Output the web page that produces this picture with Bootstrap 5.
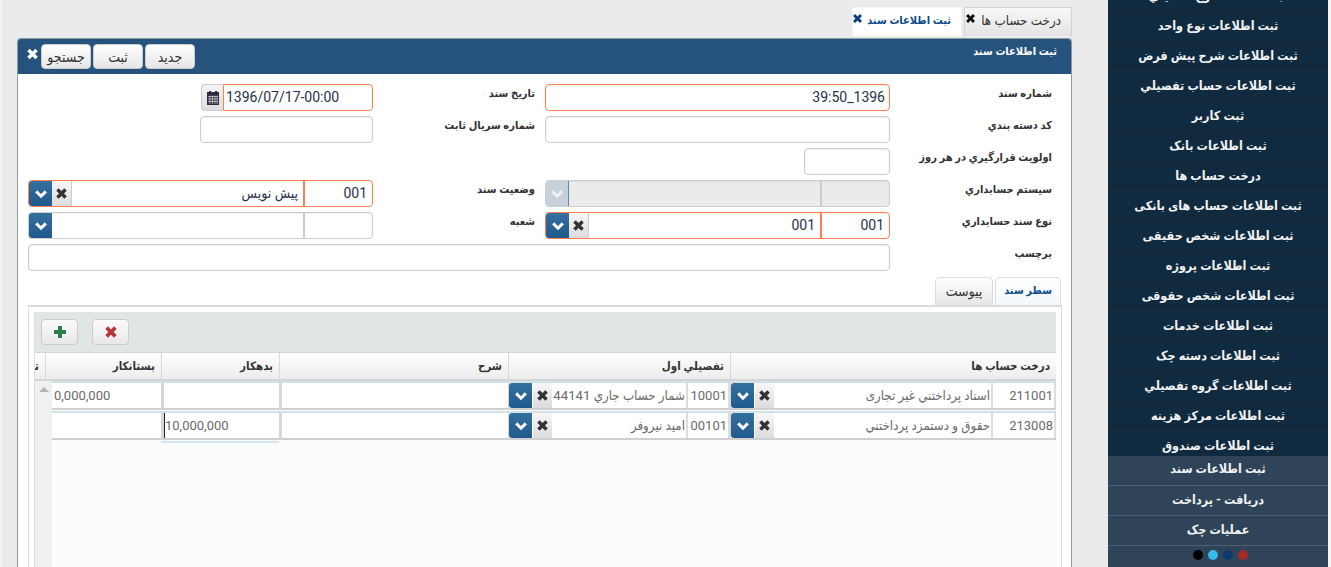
<!DOCTYPE html>
<html lang="fa">
<head>
<meta charset="utf-8">
<title>ثبت اطلاعات سند</title>
<link href="https://cdn.jsdelivr.net/npm/bootstrap@5.3.0/dist/css/bootstrap.min.css" rel="stylesheet">
<style>
html,body{height:567px;overflow:hidden}
body{background:#ebebeb;font-family:Roboto,"DejaVu Sans Condensed","DejaVu Sans",sans-serif;font-size:12px;color:#333}
.shell{height:567px;width:1331px}
.workarea{width:1108px;padding-left:15px;padding-right:36px;border-left:2px solid #f3f3f3}
.sidecol{width:220px;height:567px;background:#102a40;overflow:hidden}
.edgecol{width:3px;background:#f4f4f4}
.sidelist{height:456px;overflow:hidden}
.sidelist>div{margin-top:-18px}
.sideitem{height:30px;line-height:27px;text-align:center;color:#f2f2f2;font-weight:700;font-size:12.5px;border-bottom:1px solid #1d2b38;white-space:nowrap}
.sidebottom{height:111px;background:#2f4459}
.sidebottom .sideitem{border-bottom-color:#4d6074}
.sidebottom .sideitem:first-child{height:30px;line-height:25px}
.dotrow{height:18px;padding-top:4px;padding-left:4px;gap:5px}
.dotrow i{width:10px;height:10px;border-radius:50%;display:block}
.doctabs{height:38px;padding-top:7px;gap:2px}
.doctab{height:29px;font-size:13.300px;border:1px solid #d2d2d2;border-bottom:0;background:linear-gradient(#f7f7f7,#e4e4e4);padding:0 10px 0 0;line-height:25px;white-space:nowrap;width:108px;gap:5px;border-radius:2px 2px 0 0}
.doctab.cur{background:#fff;border-color:#f5f5f5;color:#0d4a8a;font-weight:700;font-size:11px;width:110px;padding-right:10px;gap:4px}
.doctab svg{width:11px;height:11px;margin-top:5px;fill:#111;flex:none}
.doctab.cur svg{fill:#0d3f78}
.sheet{height:529px;background:#fff;border:1px solid #8d9aa3;border-bottom:0;border-radius:4px 4px 0 0;overflow:hidden}
.sheethead{height:35px;background:#25537d;padding:0 14px 0 8px}
.sheettitle{color:#fff;font-weight:700;font-size:11px;line-height:25px}
.headbtns{gap:2px;padding-top:5px}
.tool{height:25px;width:50px;padding:0;font-size:14px;line-height:20px;color:#333;background:linear-gradient(#fff,#e6e6e6);border:1px solid #ccc;border-radius:4px}
.closer{width:13px;height:14px;fill:#fff;margin:8px 2px 0 0}
.formgrid{display:grid;grid-template-columns:162px 345px 172px 345px;grid-auto-rows:27px;row-gap:5px;margin:10px 19px 0 10px}
.lab{font-weight:700;font-size:11px;color:#333;line-height:20px;padding-right:10px;white-space:nowrap}
.lab.first{padding-right:0;text-align:right}
.fld{height:27px;min-height:27px;padding:0 4px;font-size:14px;line-height:25px;border:1px solid #ccc;border-radius:4px;color:#27304a;box-shadow:inset 0 1px 2px rgba(0,0,0,.08)}
.req{border-color:#ff7f50}
.latin{direction:ltr;text-align:left}
.datebox .latin{padding-left:2px}
.wide{grid-column:2 / -1}
.short{width:86px}
.serial{width:173px}
.datebox{width:172px}
.datebox .fld{flex:1;border-radius:0 4px 4px 0}
.calbtn{width:22px;height:27px;background:linear-gradient(#f4f4f4,#dedede);border:1px solid #ccc;border-right:0;border-radius:4px 0 0 4px}
.calbtn svg{width:12px;height:14px}
.lookup{height:27px;border:1px solid #ccc;border-radius:4px;overflow:hidden;font-size:14px;color:#27304a;box-shadow:inset 0 1px 2px rgba(0,0,0,.06)}
.lookup.req{border-color:#ff7f50}
.lookup.off{background:#ebebeb}
.codepart{width:69px;height:100%;border-left:2px solid #ccc;padding:0 5px;line-height:25px;flex:none}
.req .codepart{border-left-color:#ff7f50}
.textpart{flex:1;padding:0 5px;line-height:25px;min-width:0}
.clearbtn{width:20px;height:100%;flex:none;background:linear-gradient(#f7f7f7,#dcdcdc);border-right:1px solid #ccc}
.clearbtn svg{width:13px;height:13px;fill:#333}
.dropbtn{width:23px;height:100%;flex:none;background:linear-gradient(#36709f,#205a8d)}
.dropbtn svg{width:14px;height:14px;fill:none;stroke:#fff;stroke-width:3.4}
.off .dropbtn{background:#c8d1da;border-right:1px solid #5f87ab}
.off .dropbtn svg{stroke:#eef1f4}
.subtabs{height:28px;margin:6px 10px 0 0;gap:2px}
.subtab{height:28px;font-size:14px;line-height:26px;text-align:center;border:1px solid #dcdcdc;border-bottom:0;border-radius:5px 5px 0 0;background:linear-gradient(#fff,#e5e5e5);width:58px}
.subtab.cur{width:66px;background:linear-gradient(#fff,#f3f7fa);color:#0d4a8a;font-weight:700;font-size:11px}
.gridframe{margin:0 9px 0 10px;height:262px;border:1px solid #dcdcdc;border-width:2px 1px 0;padding:5px 5px 0 5px;background:#fff}
.gridbox{height:100%;border-left:1px solid #dcdcdc;background:#fcfcfc;overflow:hidden}
.gridtools{height:40px;background:#e2e5e6;padding:7px 6px 0;gap:14px}
.minibtn{width:37px;height:26px;padding:0;background:linear-gradient(#fbfbfb,#e8e8e8);border:1px solid #ccc;border-radius:4px}
.minibtn svg{width:14px;height:14px}
.gridhead{display:flex;height:29px;border-top:1px solid #d4d4d4;border-bottom:2px solid #d4d4d4;background:linear-gradient(#fff,#ececec)}
.gridhead>div{font-weight:700;font-size:11.5px;line-height:26px;padding-right:6px;border-left:1px solid #d8d8d8;flex:none;overflow:hidden;white-space:nowrap;color:#333}
.w1{width:326px}.w2{width:222px}.w3{width:229px}.w4{width:118px}.w5{width:116px}.w6{width:10px;border-left:0!important}
.gridbody{height:220px}
.scrollstrip{width:17px;background:#f0f0f0;flex:none;padding-top:6px}
.scrollstrip i{display:block;width:0;height:0;margin:0 auto;border:5px solid transparent;border-top:0;border-bottom:5px solid #b4b4b4}
.gridrows{flex:1;min-width:0}
.grow{display:flex;height:30px;border-top:2px solid #cfe0e6}
.grow>div{flex:none;height:27px;display:flex;gap:1px;border-left:3px solid #d6d6d6;border-bottom:2px solid #cfcfcf;background:#fff;font-size:13px;color:#6a6a6a;overflow:hidden}
.grow .g1{width:326px;border-left-width:1px}.grow .g2{width:222px;border-left-width:1px}.grow .g3{width:229px}.grow .g4{width:118px}.grow .g5{width:109px;border-left:0}
.cellcode{flex:none;line-height:25px;border-left:2px solid #ddd;border-right:2px solid #ddd;padding-right:1px}
.g1 .cellcode{width:65px}
.g2 .cellcode{width:44px}
.celltext{flex:1;min-width:0;padding:0;line-height:25px;font-size:13.200px;white-space:nowrap;overflow:hidden;text-align:right}
.grow .clearbtn{width:19px;border:0}
.grow .dropbtn{border-radius:3px 0 0 3px}
.numcell{padding:0 2px;direction:ltr;line-height:25px;width:100%;text-align:left}
.typing{border-left:1px solid #222;padding-left:0}
.belowmark{height:2px;margin-right:777px;width:118px;background:#d2e6f5}
</style>
</head>
<body>
<svg width="0" height="0" class="position-absolute">
<defs>
<symbol id="xmark" viewBox="0 0 16 16"><path d="M1.500 4.500 4.500 1.500 8 5 11.500 1.500 14.500 4.500 11 8 14.500 11.500 11.500 14.500 8 11 4.500 14.500 1.500 11.500 5 8Z"/></symbol>
<symbol id="chev" viewBox="0 0 16 16"><path d="M2.500 5 8 10.500 13.500 5"/></symbol>
</defs>
</svg>
<div class="shell d-flex">
  <div class="workarea" dir="rtl">
    <div class="doctabs d-flex">
      <div class="doctab d-flex justify-content-start">درخت حساب ها<svg><use href="#xmark"/></svg></div>
      <div class="doctab cur d-flex justify-content-start">ثبت اطلاعات سند<svg><use href="#xmark"/></svg></div>
    </div>
    <div class="sheet">
      <div class="sheethead d-flex justify-content-between">
        <div class="sheettitle">ثبت اطلاعات سند</div>
        <div class="d-flex flex-row-reverse">
          <svg class="closer"><use href="#xmark"/></svg>
          <div class="headbtns d-flex flex-row-reverse">
            <button class="btn tool">جستجو</button>
            <button class="btn tool">ثبت</button>
            <button class="btn tool">جديد</button>
          </div>
        </div>
      </div>
      <div class="formgrid">
        <div class="lab first">شماره سند</div>
        <div class="form-control fld req">1396_39:50</div>
        <div class="lab">تاریخ سند</div>
        <div class="datebox d-flex">
          <div class="form-control fld req latin">1396/07/17-00:00</div>
          <div class="calbtn d-flex align-items-center justify-content-center"><svg viewBox="0 0 12 14"><rect x="0" y="1" width="12" height="13" fill="#2f2a3e"/><rect x="2" y="0" width="2" height="3" fill="#2f2a3e"/><rect x="8" y="0" width="2" height="3" fill="#2f2a3e"/><path d="M1 5.500H11M1 8H11M1 10.500H11M3 4.500V13M5.500 4.500V13M8 4.500V13M10.200 4.500V13" stroke="#d8d8e0" stroke-width=".7" fill="none"/></svg></div>
        </div>

        <div class="lab first">کد دسته بندي</div>
        <div class="form-control fld"></div>
        <div class="lab">شماره سریال ثابت</div>
        <div class="form-control fld serial"></div>

        <div class="lab first">اولویت قرارگيري در هر روز</div>
        <div class="form-control fld short"></div>
        <div></div>
        <div></div>

        <div class="lab first">سیستم حسابداري</div>
        <div class="lookup off d-flex">
          <div class="codepart"></div>
          <div class="textpart"></div>
          <div class="dropbtn d-flex align-items-center justify-content-center"><svg><use href="#chev"/></svg></div>
        </div>
        <div class="lab">وضعیت سند</div>
        <div class="lookup req d-flex">
          <div class="codepart">001</div>
          <div class="textpart">پیش نویس</div>
          <div class="clearbtn d-flex align-items-center justify-content-center"><svg><use href="#xmark"/></svg></div>
          <div class="dropbtn d-flex align-items-center justify-content-center"><svg><use href="#chev"/></svg></div>
        </div>

        <div class="lab first">نوع سند حسابداري</div>
        <div class="lookup req d-flex">
          <div class="codepart">001</div>
          <div class="textpart">001</div>
          <div class="clearbtn d-flex align-items-center justify-content-center"><svg><use href="#xmark"/></svg></div>
          <div class="dropbtn d-flex align-items-center justify-content-center"><svg><use href="#chev"/></svg></div>
        </div>
        <div class="lab">شعبه</div>
        <div class="lookup d-flex">
          <div class="codepart"></div>
          <div class="textpart"></div>
          <div class="dropbtn d-flex align-items-center justify-content-center"><svg><use href="#chev"/></svg></div>
        </div>

        <div class="lab first">برچسب</div>
        <div class="form-control fld wide"></div>
      </div>

      <div class="subtabs d-flex">
        <div class="subtab cur">سطر سند</div>
        <div class="subtab">پیوست</div>
      </div>
      <div class="gridframe">
        <div class="gridbox">
          <div class="gridtools d-flex flex-row-reverse justify-content-start">
            <button class="btn minibtn d-flex align-items-center justify-content-center"><svg viewBox="0 0 14 14"><path d="M5 1H9V5H13V9H9V13H5V9H1V5H5Z" fill="#2e7d46"/></svg></button>
            <button class="btn minibtn d-flex align-items-center justify-content-center"><svg fill="#b5363a"><use href="#xmark"/></svg></button>
          </div>
          <div class="gridhead">
            <div class="w1">درخت حساب ها</div>
            <div class="w2">تفصیلي اول</div>
            <div class="w3">شرح</div>
            <div class="w4">بدهکار</div>
            <div class="w5">بستانکار</div>
            <div class="w6">توضیح</div>
          </div>
          <div class="gridbody d-flex">
            <div class="gridrows">
              <div class="grow">
                <div class="g1"><div class="cellcode">211001</div><div class="celltext">اسناد پرداختني غیر تجاری</div><div class="clearbtn d-flex align-items-center justify-content-center"><svg><use href="#xmark"/></svg></div><div class="dropbtn d-flex align-items-center justify-content-center"><svg><use href="#chev"/></svg></div></div>
                <div class="g2"><div class="cellcode">10001</div><div class="celltext">شمار حساب  جاري 44141</div><div class="clearbtn d-flex align-items-center justify-content-center"><svg><use href="#xmark"/></svg></div><div class="dropbtn d-flex align-items-center justify-content-center"><svg><use href="#chev"/></svg></div></div>
                <div class="g3"></div>
                <div class="g4"></div>
                <div class="g5"><div class="numcell">0,000,000</div></div>
              </div>
              <div class="grow">
                <div class="g1"><div class="cellcode">213008</div><div class="celltext">حقوق و دستمزد پرداختني</div><div class="clearbtn d-flex align-items-center justify-content-center"><svg><use href="#xmark"/></svg></div><div class="dropbtn d-flex align-items-center justify-content-center"><svg><use href="#chev"/></svg></div></div>
                <div class="g2"><div class="cellcode">00101</div><div class="celltext">امید نیروفر</div><div class="clearbtn d-flex align-items-center justify-content-center"><svg><use href="#xmark"/></svg></div><div class="dropbtn d-flex align-items-center justify-content-center"><svg><use href="#chev"/></svg></div></div>
                <div class="g3"></div>
                <div class="g4"><div class="numcell typing">10,000,000</div></div>
                <div class="g5"></div>
              </div>
              <div class="belowmark"></div>
            </div>
            <div class="scrollstrip"><i></i></div>
          </div>
        </div>
      </div>
    </div>
  </div>
  <div class="sidecol" dir="rtl">
    <div class="sidelist"><div>
      <div class="sideitem">ثبت اطلاعات نوع تفصیلي</div>
      <div class="sideitem">ثبت اطلاعات نوع واحد</div>
      <div class="sideitem">ثبت اطلاعات شرح پیش فرض</div>
      <div class="sideitem">ثبت اطلاعات حساب تفصیلي</div>
      <div class="sideitem">ثبت کاربر</div>
      <div class="sideitem">ثبت اطلاعات بانک</div>
      <div class="sideitem">درخت حساب ها</div>
      <div class="sideitem">ثبت اطلاعات حساب های بانکی</div>
      <div class="sideitem">ثبت اطلاعات شخص حقیقی</div>
      <div class="sideitem">ثبت اطلاعات پروژه</div>
      <div class="sideitem">ثبت اطلاعات شخص حقوقی</div>
      <div class="sideitem">ثبت اطلاعات خدمات</div>
      <div class="sideitem">ثبت اطلاعات دسته چک</div>
      <div class="sideitem">ثبت اطلاعات گروه تفصیلي</div>
      <div class="sideitem">ثبت اطلاعات مرکز هزینه</div>
      <div class="sideitem">ثبت اطلاعات صندوق</div>
    </div></div>
    <div class="sidebottom">
      <div class="sideitem">ثبت اطلاعات سند</div>
      <div class="sideitem">دریافت - پرداخت</div>
      <div class="sideitem">عملیات چک</div>
      <div class="dotrow d-flex justify-content-center">
        <i style="background:#a52a2a"></i><i style="background:#0c3a6e"></i><i style="background:#34bbea"></i><i style="background:#000"></i>
      </div>
    </div>
  </div>
  <div class="edgecol"></div>
</div>
<script src="https://cdn.jsdelivr.net/npm/bootstrap@5.3.0/dist/js/bootstrap.bundle.min.js"></script>
</body>
</html>
